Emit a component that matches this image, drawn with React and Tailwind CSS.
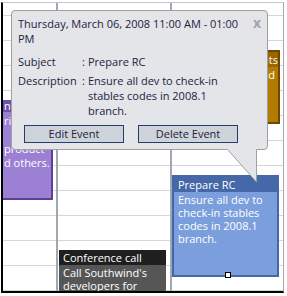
import React from 'react'

const FONT = "font-['Open_Sans','Noto_Sans',sans-serif]"

function Column({ className = '' }) {
  return (
    <div className={`flex flex-col ${className}`}>
      <div className="h-[23px] border-b border-[#d6d6d6]" />
      {Array.from({ length: 11 }).map((_, i) => (
        <div key={i} className="h-[25px] shrink-0 border-b border-[#d6d6d6]" />
      ))}
    </div>
  )
}

function EventBox({ className, head, headClass, bodyClass, lineClass = '', lines, children }) {
  return (
    <div className={`absolute flex flex-col overflow-hidden ${className}`}>
      <div className={`flex px-[4px] text-white whitespace-pre ${headClass}`}>{head}</div>
      <div className={`flex-1 px-[4px] text-white ${bodyClass}`}>
        {lines.map((l, i) => (
          <div key={i} className={`flex whitespace-pre ${lineClass}`}>{l || '\u00a0'}</div>
        ))}
      </div>
      {children}
    </div>
  )
}

export default function App() {
  return (
    <div className={`relative w-[287px] h-[296px] bg-white overflow-hidden text-[11px] ${FONT}`}>
      <div className="pt-[2px] pl-[1px]">
        <div className="relative w-[283px] h-[291px] border-l-2 border-b-2 border-l-black border-b-black border-t border-t-[#c8c8c8] border-r border-r-[#a3a8b0] overflow-hidden">
          <div className="flex h-full">
            <Column className="w-[55px] border-r-2 border-[#a3a8b0]" />
            <Column className="w-[114px] border-r-2 border-[#a3a8b0]" />
            <Column className="flex-1" />
          </div>

          {/* purple */}
          <EventBox
            className="left-0 top-[97px] w-[50px] h-[100px] border-r-2 border-b-2 border-[#5c3f9c]"
            head="n"
            headClass="h-[12px] leading-[12px] bg-[#6f51ad] !px-[1px]"
            bodyClass="pt-[2px] leading-[14px] bg-[#9b80d4] !px-[1px]"
            lines={['ri', '', 'product', 'd others.']}
          />

          {/* orange */}
          <EventBox
            className="left-[200px] top-[47px] w-[77px] h-[74px] border-2 border-[#6e4700]"
            head="Review comments"
            headClass="h-[15px] leading-[15px] justify-end !pr-0 bg-[#9a6500]"
            bodyClass="pt-[1px] leading-[13px] !pr-[3px] bg-[#b17c00]"
            lineClass="justify-end"
            lines={['Check and']}
          />

          {/* prepare rc */}
          <EventBox
            className="left-[169px] top-[172px] w-[107px] h-[102px] border-2 border-[#4766a6]"
            head="Prepare RC"
            headClass="h-[15px] leading-[15px] bg-[#4568a8]"
            bodyClass="pt-[1px] leading-[13px] bg-[#7b9fdc]"
            lines={['Ensure all dev to', 'check-in stables', 'codes in 2008.1', 'branch.']}
          />
          <div className="absolute left-[222px] top-[269px] w-[6px] h-[6px] bg-white border border-black" />

          {/* conference call */}
          <EventBox
            className="left-[56px] top-[247px] w-[107px] h-[60px]"
            head="Conference call"
            headClass="h-[15px] leading-[15px] bg-[#1f1f1f]"
            bodyClass="pt-[1px] leading-[13px] bg-[#565656]"
            lines={["Call Southwind's", 'developers for']}
          />
        </div>
      </div>

      {/* popup */}
      <div className="absolute left-[11px] top-[10px] w-[257px] h-[140px] rounded-[4px] border border-[#a0a0a0] bg-[#e4e5e9] text-[#1b2240]">
        <span className="absolute right-[6px] top-[1px] text-[14px] font-bold text-[#a5a5a5]">x</span>
        <div className="pl-[6px] pt-[5px] leading-[15px]">
          <div>Thursday, March 06, 2008 11:00 AM - 01:00</div>
          <div>PM</div>
        </div>
        <div className="pl-[6px] mt-[8px] leading-[15px]">
          <div className="flex">
            <span className="w-[64px] shrink-0">Subject</span>
            <span className="w-[6px] shrink-0">:</span>
            <span>Prepare RC</span>
          </div>
          <div className="flex mt-[4px]">
            <span className="w-[64px] shrink-0">Description</span>
            <span className="w-[6px] shrink-0">:</span>
            <span>
              Ensure all dev to check-in
              <br />
              stables codes in 2008.1
              <br />
              branch.
            </span>
          </div>
        </div>
        <div className="flex gap-[14px] pl-[12px] mt-[7px]">
          <button className="w-[100px] h-[18px] leading-[16px] bg-[#ced2d9] border border-[#24406a] text-[#1b2240]">Edit Event</button>
          <button className="w-[100px] h-[18px] leading-[16px] bg-[#ced2d9] border border-[#24406a] text-[#1b2240]">Delete Event</button>
        </div>
        <svg className="absolute left-[215px] top-[138px]" width="31" height="35" viewBox="0 0 31 35">
          <polygon points="0,0 29.5,0 29.5,33" fill="#e4e5e9" />
          <polyline points="0.5,0.5 29.5,33 29.5,0.5" fill="none" stroke="#a0a0a0" strokeWidth="1" />
        </svg>
      </div>
    </div>
  )
}
